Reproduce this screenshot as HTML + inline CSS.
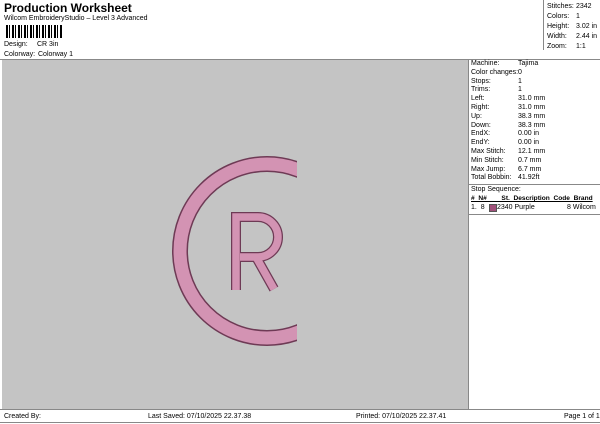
<!DOCTYPE html>
<html><head><style>
body{margin:0;width:600px;height:424px;background:#fff;font-family:"Liberation Sans",sans-serif;color:#000;position:relative;overflow:hidden;font-size:7px}
.a{position:absolute;white-space:nowrap}
</style></head><body>
<div class="a" style="left:4px;top:1px;font-size:12px;font-weight:bold">Production Worksheet</div>
<div class="a" style="left:4px;top:15px">Wilcom EmbroideryStudio – Level 3 Advanced</div>
<div class="a" style="left:6px;top:25px;width:56px;height:13px;background:repeating-linear-gradient(90deg,#000 0 2px,#fff 2px 3px,#000 3px 4px,#fff 4px 6px)"></div>
<div class="a" style="left:4px;top:41px">Design:</div><div class="a" style="left:37px;top:41px">CR 3in</div>
<div class="a" style="left:4px;top:51px">Colorway:</div><div class="a" style="left:38px;top:51px">Colorway 1</div>
<div class="a" style="left:543px;top:0;width:56px;height:50px;border-left:1px solid #888"></div>
<div class="a" style="left:547px;top:2px;line-height:10px">Stitches:<br>Colors:<br>Height:<br>Width:<br>Zoom:</div>
<div class="a" style="left:576px;top:2px;line-height:10px">2342<br>1<br>3.02 in<br>2.44 in<br>1:1</div>
<div class="a" style="left:0;top:59px;width:600px;height:1px;background:#888"></div>
<div class="a" style="left:2px;top:60px;width:466px;height:349px;background:#c4c4c4"></div>
<div class="a" style="left:468px;top:60px;width:1px;height:349px;background:#888"></div>
<div class="a" style="left:471px;top:60px;line-height:8.8px">Machine:<br>Color changes:<br>Stops:<br>Trims:<br>Left:<br>Right:<br>Up:<br>Down:<br>EndX:<br>EndY:<br>Max Stitch:<br>Min Stitch:<br>Max Jump:<br>Total Bobbin:</div>
<div class="a" style="left:518px;top:60px;line-height:8.8px">Tajima<br>0<br>1<br>1<br>31.0 mm<br>31.0 mm<br>38.3 mm<br>38.3 mm<br>0.00 in<br>0.00 in<br>12.1 mm<br>0.7 mm<br>6.7 mm<br>41.92ft</div>
<div class="a" style="left:469px;top:184px;width:131px;height:1px;background:#888"></div>
<div class="a" style="left:471px;top:186px">Stop Sequence:</div>
<div class="a" style="left:471px;top:195px;font-weight:bold;text-decoration:underline;font-size:6.6px">#&nbsp; N#&nbsp;&nbsp;&nbsp;&nbsp;&nbsp;&nbsp;&nbsp; St.&nbsp; Description&nbsp; Code&nbsp; Brand</div>
<div class="a" style="left:471px;top:204px">1.&nbsp; 8</div>
<div class="a" style="left:489px;top:204px;width:6px;height:6px;background:#a0507a;border:1px solid #555"></div>
<div class="a" style="left:497px;top:204px">2340 Purple</div>
<div class="a" style="left:567px;top:204px">8 Wilcom</div>
<div class="a" style="left:469px;top:214px;width:131px;height:1px;background:#888"></div>
<svg class="a" style="left:0;top:0" width="600" height="424">
<defs><clipPath id="c"><rect x="0" y="0" width="297" height="424"/></clipPath></defs>
<circle cx="267" cy="251" r="87" fill="none" stroke="#6e3a55" stroke-width="16" clip-path="url(#c)"/>
<circle cx="267" cy="251" r="87" fill="none" stroke="#d393b3" stroke-width="13" clip-path="url(#c)"/>
<g fill="none" stroke-linejoin="miter">
<path d="M236 290V217H258A20 20 0 0 1 258 257H240M256 257L274 289" stroke="#6e3a55" stroke-width="10"/>
<path d="M236 290V217H258A20 20 0 0 1 258 257H240M256 257L274 289" stroke="#d393b3" stroke-width="7.5"/>
</g>
</svg>
<div class="a" style="left:0;top:409px;width:600px;height:1px;background:#888"></div>
<div class="a" style="left:4px;top:413px">Created By:</div>
<div class="a" style="left:148px;top:413px">Last Saved: 07/10/2025 22.37.38</div>
<div class="a" style="left:356px;top:413px">Printed: 07/10/2025 22.37.41</div>
<div class="a" style="left:564px;top:413px">Page 1 of 1</div>
<div class="a" style="left:0;top:422px;width:600px;height:1px;background:#888"></div>
</body></html>
